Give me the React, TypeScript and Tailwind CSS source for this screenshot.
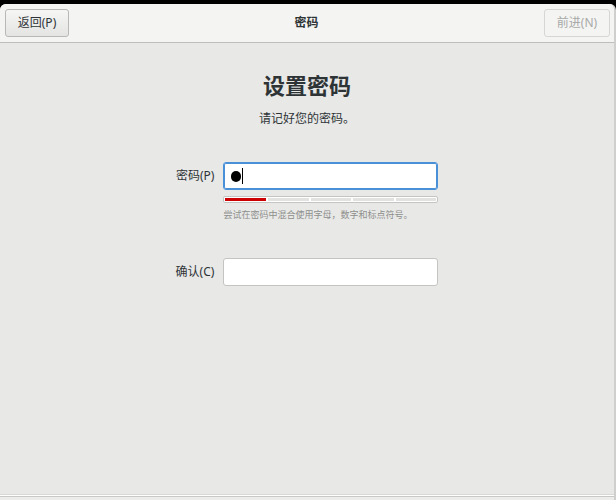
export default function App() {
  const font = "[font-family:'Noto_Sans','Noto_Sans_CJK_SC',sans-serif]";
  return (
    <div className={`flex h-[500px] w-[616px] flex-col overflow-hidden bg-black ${font}`}>
      <div className="mt-[4px] flex min-h-0 flex-1 flex-col overflow-hidden rounded-t-[6px] border-r-2 border-[#cfcfcd] bg-[#e8e8e7]">
        <header className="flex h-[39px] shrink-0 items-center justify-between border-b border-[#bdbdbb] bg-[#f4f4f3] pl-[5px] pr-[4px]">
          <button className="h-[28px] w-[64px] rounded-[3px] border border-[#b8b8b6] bg-gradient-to-b from-[#f6f6f5] to-[#e4e4e2] text-[12px] text-[#2e3436]">
            返回(P)
          </button>
          <span className="text-[12px] font-bold text-[#2e3436]">密码</span>
          <button className="h-[28px] w-[66px] rounded-[3px] border border-[#d6d6d4] bg-[#f4f4f3] text-[12px] text-[#a8aaa8]">
            前进(N)
          </button>
        </header>
        <main className="flex flex-1 flex-col items-center pt-[25px]">
          <h1 className="text-[22px] font-bold leading-[34px] text-[#2e3436]">设置密码</h1>
          <p className="mt-[8px] text-[12px] text-[#2e3436]">请记好您的密码。</p>
          <div className="mt-[34px] grid grid-cols-[auto_215px] items-center gap-x-[9px]">
            <label className="text-right text-[12px] text-[#2e3436]">密码(P)</label>
            <div className="flex h-[28px] items-center rounded-[3px] border border-[#4a90d9] bg-white pl-[7px] shadow-[inset_0_0_0_1px_#4a90d9]">
              <span className="h-[11px] w-[10px] rounded-full bg-black" />
              <span className="ml-[1px] h-[16px] w-px bg-black" />
            </div>
            <div />
            <div className="mt-[6px] flex h-[7px] gap-[2px] rounded-[2px] border border-[#c4c4c2] bg-white p-[1px]">
              <span className="flex-1 bg-[#cc0000]" />
              <span className="flex-1 bg-[#e2e2e0]" />
              <span className="flex-1 bg-[#e2e2e0]" />
              <span className="flex-1 bg-[#e2e2e0]" />
              <span className="flex-1 bg-[#e2e2e0]" />
            </div>
            <div />
            <p className="mt-[5px] text-[9px] text-[#8d8f8c]">尝试在密码中混合使用字母，数字和标点符号。</p>
            <label className="mt-[36px] text-right text-[12px] text-[#2e3436]">确认(C)</label>
            <div className="mt-[36px] h-[28px] rounded-[3px] border border-[#c4c4c2] bg-white" />
          </div>
        </main>
        <div className="h-[2px] shrink-0 border-t border-[#d8d8d6] bg-white" />
        <div className="h-[4px] shrink-0 border-t border-[#c8c8c6] bg-[#ececeb]" />
      </div>
    </div>
  );
}
